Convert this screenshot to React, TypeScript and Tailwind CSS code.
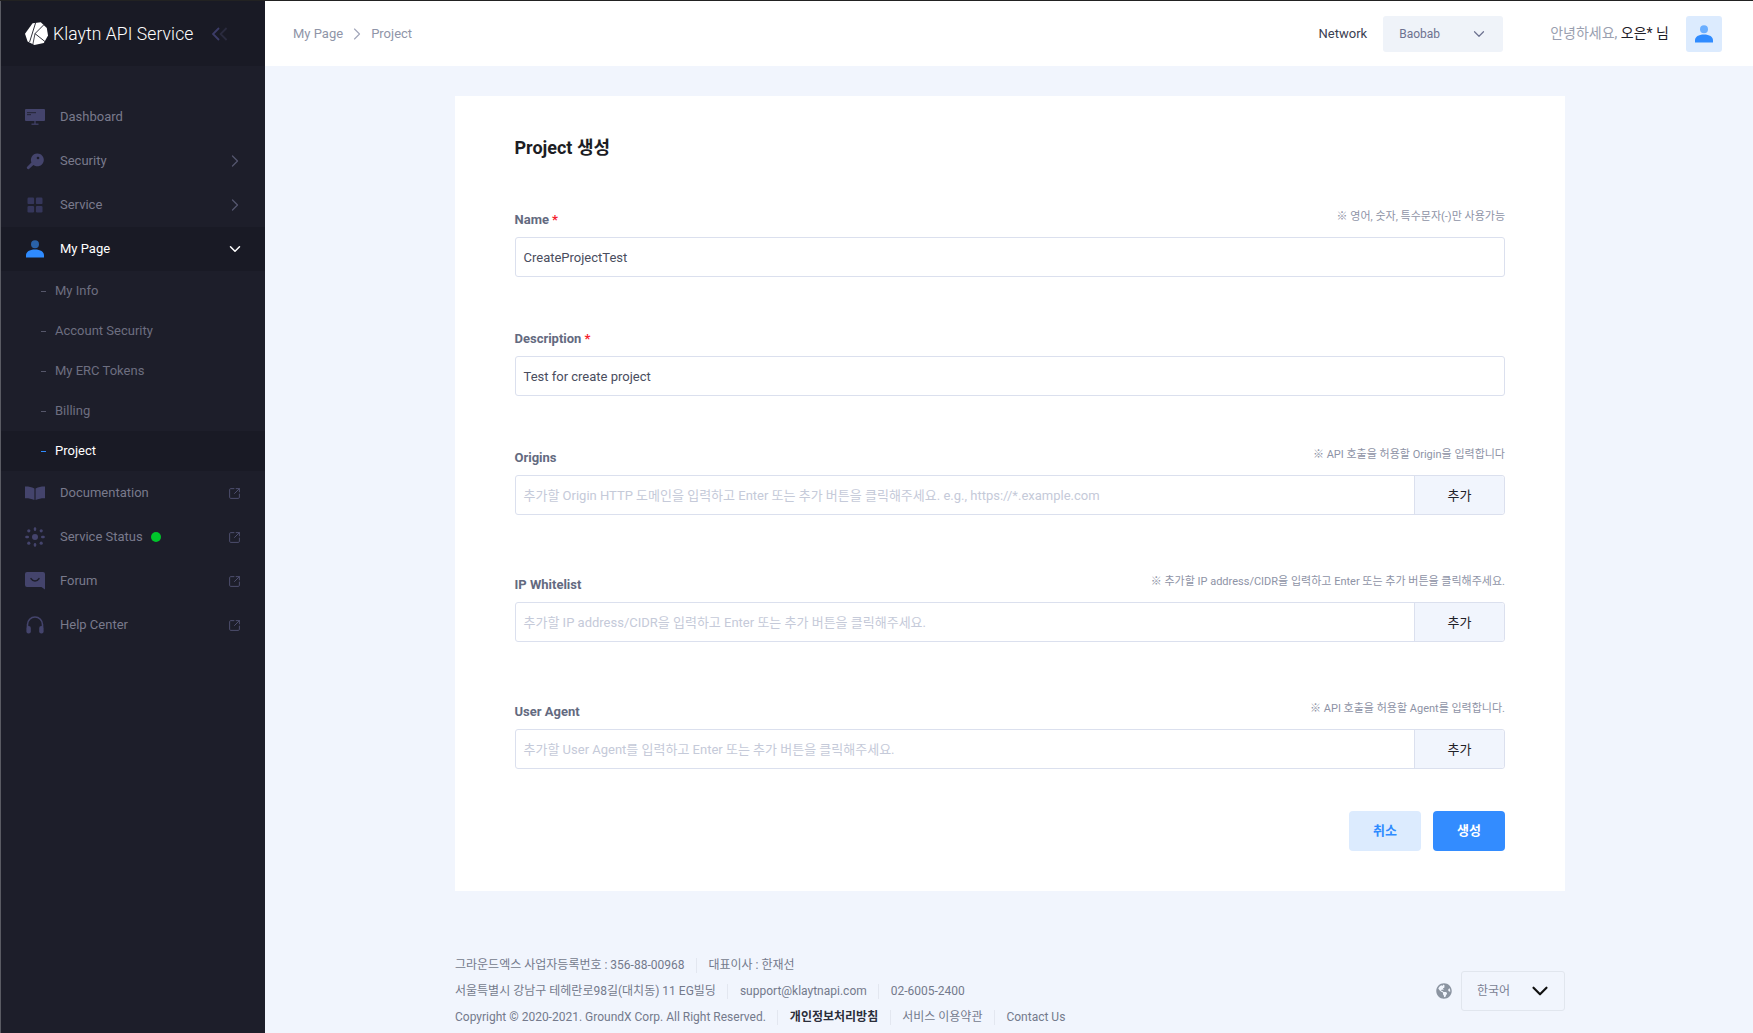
import { ChevronDown, ChevronRight, SquareArrowOutUpRight } from 'lucide-react'
import { FaGlobeAmericas } from 'react-icons/fa'
import type { ReactNode } from 'react'

const iconColor = '#44446c'

function DashboardIcon() {
  return (
    <svg width="20" height="16" viewBox="0 0 20 16">
      <rect x="0" y="0" width="20" height="12" rx="1" fill={iconColor} />
      <rect x="2" y="3" width="9" height="1.2" fill="#1d1e2a" opacity="0.7" />
      <rect x="2" y="5" width="4" height="1.2" fill="#1d1e2a" opacity="0.7" />
      <rect x="9.4" y="12" width="1.2" height="3" fill={iconColor} />
      <rect x="6.5" y="14.6" width="7" height="1.2" fill={iconColor} />
    </svg>
  )
}

function KeyIcon() {
  return (
    <svg width="18" height="17" viewBox="0 0 18 17">
      <path d="M11 0.5a6.4 6.4 0 1 1-3.6 11.4L3 16a1.5 1.5 0 0 1-2-2l4.4-4.6A6.4 6.4 0 0 1 11 0.5z" fill={iconColor} />
      <circle cx="12" cy="5" r="1.3" fill="#1d1e2a" />
    </svg>
  )
}

function GridIcon() {
  return (
    <svg width="16" height="16" viewBox="0 0 16 16" fill="#35365a">
      <rect x="0.5" y="0.5" width="6.6" height="6.6" rx="1.2" />
      <rect x="8.9" y="0.5" width="6.6" height="6.6" rx="1.2" />
      <rect x="0.5" y="8.9" width="6.6" height="6.6" rx="1.2" />
      <rect x="8.9" y="8.9" width="6.6" height="6.6" rx="1.2" />
    </svg>
  )
}

function UserIcon({ head, body }: { head: string; body: string }) {
  return (
    <svg width="18" height="18" viewBox="0 0 18 18">
      <circle cx="9" cy="4.2" r="4" fill={head} />
      <path d="M0 17.5v-2.2C0 12 3.5 9.6 9 9.6s9 2.4 9 5.7v2.2z" fill={body} />
    </svg>
  )
}

function BookIcon() {
  return (
    <svg width="20" height="14" viewBox="0 0 20 14" fill={iconColor}>
      <path d="M0 0.6C3 0.4 6 1 9.4 2.4V14C6 12.6 3 12 0 12.2z" />
      <path d="M20 0.6C17 0.4 14 1 10.6 2.4V14C14 12.6 17 12 20 12.2z" />
    </svg>
  )
}

function StatusIcon() {
  return (
    <svg width="20" height="20" viewBox="0 0 20 20" fill={iconColor}>
      <circle cx="10" cy="10" r="3" />
      <rect x="8.8" y="0.2" width="2.4" height="3.8" rx="1.2" />
      <rect x="8.8" y="16" width="2.4" height="3.8" rx="1.2" />
      <rect x="0.2" y="8.8" width="3.8" height="2.4" rx="1.2" />
      <rect x="16" y="8.8" width="3.8" height="2.4" rx="1.2" />
      <circle cx="3.8" cy="3.8" r="1.6" />
      <circle cx="16.2" cy="3.8" r="1.6" />
      <circle cx="3.8" cy="16.2" r="1.6" />
      <circle cx="16.2" cy="16.2" r="1.6" />
    </svg>
  )
}

function ForumIcon() {
  return (
    <svg width="20" height="18" viewBox="0 0 20 18">
      <path d="M2 0h16a2 2 0 0 1 2 2v15.6L16.4 15H2a2 2 0 0 1-2-2V2a2 2 0 0 1 2-2z" fill={iconColor} />
      <path d="M6 6.6c1 1.6 2.4 2.3 4 2.3s3-.7 4-2.3" stroke="#1d1e2a" strokeWidth="1.5" fill="none" strokeLinecap="round" />
    </svg>
  )
}

function HeadsetIcon() {
  return (
    <svg width="18" height="18" viewBox="0 0 18 18">
      <path d="M1.5 11V8.5a7.5 7.5 0 0 1 15 0V11" stroke={iconColor} strokeWidth="1.6" fill="none" />
      <rect x="0.4" y="10" width="4.4" height="7.4" rx="2" fill={iconColor} />
      <rect x="13.2" y="10" width="4.4" height="7.4" rx="2" fill={iconColor} />
    </svg>
  )
}

function KlaytnLogo() {
  return (
    <svg width="23" height="23" viewBox="0 0 23 23">
      <path d="M7.6 1.2L15.8 0.2L21.8 6L23 13.4L18.8 21L9.4 23L2.6 19.4L0 11.8z" fill="#fff" />
      <path d="M10.8 0.2L4.6 20" stroke="#191a25" strokeWidth="0.9" />
      <path d="M18.8 2.8L10 11.6L21 20.4" stroke="#191a25" strokeWidth="0.9" fill="none" />
      <path d="M10 11.6L7.8 22.6" stroke="#191a25" strokeWidth="0.8" />
    </svg>
  )
}

function MenuRow({ icon, label, right, active }: { icon: ReactNode; label: ReactNode; right?: ReactNode; active?: boolean }) {
  return (
    <div className={`flex items-center h-11 pl-6 pr-6 ${active ? 'bg-[#191a25] text-white' : 'text-[#797a8c]'}`}>
      <div className="w-5 h-5 flex items-center justify-center">{icon}</div>
      <div className="ml-[15px] flex-1 flex items-center text-[13px]">{label}</div>
      {right}
    </div>
  )
}

function SubRow({ label, active }: { label: string; active?: boolean }) {
  return (
    <div className={`flex items-center h-10 pl-10 text-[13px] ${active ? 'bg-[#191a25] text-white' : 'text-[#6d6e80]'}`}>
      <div className={`w-[5px] h-px ${active ? 'bg-[#2f8bff]' : 'bg-[#56576a]'}`} />
      <span className="ml-[9px]">{label}</span>
    </div>
  )
}

const ext = <SquareArrowOutUpRight size={13} strokeWidth={1.8} className="text-[#4f5070]" />
const arrow = <ChevronRight size={20} strokeWidth={1.5} className="text-[#55566e] -mr-[4px]" />

function Sidebar() {
  return (
    <aside className="w-[265px] shrink-0 bg-[#1d1e2a] border-l border-[#5a5b63]">
      <div className="h-[65px] bg-[#191a25] flex items-center pl-6">
        <KlaytnLogo />
        <span className="ml-[5px] pt-[2px] text-[17.5px] font-light text-white tracking-[0.1px]">Klaytn API Service</span>
        <svg className="ml-[19px]" width="16" height="14" viewBox="0 0 16 14" fill="none" strokeWidth="1.8">
          <path d="M14.6 1L8.6 7l6 6" stroke="#2a2b3e" />
          <path d="M7 1L1 7l6 6" stroke="#3c3c68" />
        </svg>
      </div>
      <nav className="pt-[29px]">
        <MenuRow icon={<DashboardIcon />} label="Dashboard" />
        <MenuRow icon={<KeyIcon />} label="Security" right={arrow} />
        <MenuRow icon={<GridIcon />} label="Service" right={arrow} />
        <MenuRow
          active
          icon={<UserIcon head="#2a62a8" body="#2f8bff" />}
          label="My Page"
          right={<ChevronDown size={18} strokeWidth={2} className="text-white -mr-[3px] -mt-[1px]" />}
        />
        <SubRow label="My Info" />
        <SubRow label="Account Security" />
        <SubRow label="My ERC Tokens" />
        <SubRow label="Billing" />
        <SubRow label="Project" active />
        <MenuRow icon={<BookIcon />} label="Documentation" right={ext} />
        <MenuRow
          icon={<StatusIcon />}
          label={
            <>
              Service Status
              <span className="ml-2 w-[10px] h-[10px] rounded-full bg-[#00c52b]" />
            </>
          }
          right={ext}
        />
        <MenuRow icon={<ForumIcon />} label="Forum" right={ext} />
        <MenuRow icon={<HeadsetIcon />} label="Help Center" right={ext} />
      </nav>
    </aside>
  )
}

function TopBar() {
  return (
    <header className="h-[65px] bg-white flex items-center pl-[28px] pr-[31px] text-[13px]">
      <span className="text-[#8f95a8]">My Page</span>
      <ChevronRight size={20} strokeWidth={1.4} className="text-[#a2a7ba] ml-[4px]" />
      <span className="text-[#8f95a8] ml-[4px]">Project</span>
      <div className="ml-auto flex items-center">
        <span className="text-[#3b4052]">Network</span>
        <div className="ml-4 w-[120px] h-9 rounded-[3px] bg-[#eff3f9] flex items-center pl-4 pr-[15px] text-[12px] text-[#6d7290]">
          <span className="flex-1">Baobab</span>
          <ChevronDown size={18} strokeWidth={1.6} className="text-[#6d7290]" />
        </div>
        <span className="ml-[47px] text-[#9a9fb0] text-[14px]">
          안녕하세요, <span className="text-[#1f2027]">오은* 님</span>
        </span>
        <div className="ml-[17px] w-9 h-9 rounded-[3px] bg-[#dcebfe] flex items-center justify-center">
          <UserIcon head="#6aaeff" body="#2f8bff" />
        </div>
      </div>
    </header>
  )
}

function Field({ label, required, hint, children, className }: { label: string; required?: boolean; hint?: string; children: ReactNode; className: string }) {
  return (
    <div className={className}>
      <div className="h-5 mb-[7px] flex items-center justify-between">
        <span className="text-[13px] font-bold text-[#636a80] -ml-[0.5px]">
          {label}
          {required && <span className="text-[#f5222d] ml-[3px]">*</span>}
        </span>
        {hint && <span className="text-[11px] text-[#8e93a6] pb-[5px]">{hint}</span>}
      </div>
      {children}
    </div>
  )
}

function ValueInput({ value }: { value: string }) {
  return (
    <div className="h-10 border border-[#dbe0ee] rounded-[3px] flex items-center pl-[7.5px] pr-2 pt-[2px] text-[13px] text-[#494d5e]">
      {value}
    </div>
  )
}

function AddInput({ placeholder }: { placeholder: string }) {
  return (
    <div className="h-10 border border-[#dbe0ee] rounded-[3px] flex">
      <div className="flex-1 flex items-center pl-[7.5px] pr-2 pt-[2px] text-[13px] text-[#c5cad9]">{placeholder}</div>
      <div className="w-[90px] bg-[#f1f5fd] border-l border-[#dbe0ee] rounded-r-[3px] flex items-center justify-center pt-[2px] text-[13px] text-[#1f2027]">
        추가
      </div>
    </div>
  )
}

function Sep() {
  return <span className="w-px h-[15px] bg-[#e3e7f0] mx-[11.5px]" />
}

function Footer() {
  return (
    <footer className="mt-[64px] flex items-center justify-between text-[12px] text-[#747a8c]">
      <div className="flex flex-col gap-[6px]">
        <div className="flex items-center h-5">
          <span>그라운드엑스 사업자등록번호 : 356-88-00968</span>
          <Sep />
          <span>대표이사 : 한재선</span>
        </div>
        <div className="flex items-center h-5">
          <span>서울특별시 강남구 테헤란로98길(대치동) 11 EG빌딩</span>
          <Sep />
          <span>support@klaytnapi.com</span>
          <Sep />
          <span>02-6005-2400</span>
        </div>
        <div className="flex items-center h-5">
          <span>Copyright © 2020-2021. GroundX Corp. All Right Reserved.</span>
          <Sep />
          <span className="font-bold text-[#2b2e3a]">개인정보처리방침</span>
          <Sep />
          <span>서비스 이용약관</span>
          <Sep />
          <span>Contact Us</span>
        </div>
      </div>
      <div className="flex items-center">
        <FaGlobeAmericas size={16} className="text-[#8b94a1]" />
        <div className="ml-[9px] w-[104px] h-10 border border-[#e1e6ee] rounded-[3px] flex items-center pl-[15px] pr-[11px] text-[#7a7f93]">
          <span className="flex-1">한국어</span>
          <ChevronDown size={26} strokeWidth={2} className="text-[#111]" />
        </div>
      </div>
    </footer>
  )
}

export default function App() {
  return (
    <div className="h-[1033px] overflow-hidden bg-[#f1f5fd] font-[Roboto,'Noto_Sans_CJK_KR',sans-serif]">
      <div className="h-px bg-[#222]" />
      <div className="flex h-[1032px]">
        <Sidebar />
        <div className="flex-1 min-w-0">
          <TopBar />
          <main className="pl-[190px] pt-[30px]">
            <section className="w-[1110px] bg-white px-[60px] pt-[39px] pb-[40px]">
              <h1 className="h-6 -ml-[0.5px] flex items-center text-[18px] font-bold text-[#1c1d24]">Project 생성</h1>
              <Field className="mt-[51px]" label="Name" required hint="※ 영어, 숫자, 특수문자(-)만 사용가능">
                <ValueInput value="CreateProjectTest" />
              </Field>
              <Field className="mt-[52px]" label="Description" required>
                <ValueInput value="Test for create project" />
              </Field>
              <Field className="mt-[52px]" label="Origins" hint="※ API 호출을 허용할 Origin을 입력합니다">
                <AddInput placeholder="추가할 Origin HTTP 도메인을 입력하고 Enter 또는 추가 버튼을 클릭해주세요. e.g., https://*.example.com" />
              </Field>
              <Field className="mt-[60px]" label="IP Whitelist" hint="※ 추가할 IP address/CIDR을 입력하고 Enter 또는 추가 버튼을 클릭해주세요.">
                <AddInput placeholder="추가할 IP address/CIDR을 입력하고 Enter 또는 추가 버튼을 클릭해주세요." />
              </Field>
              <Field className="mt-[60px]" label="User Agent" hint="※ API 호출을 허용할 Agent를 입력합니다.">
                <AddInput placeholder="추가할 User Agent를 입력하고 Enter 또는 추가 버튼을 클릭해주세요." />
              </Field>
              <div className="mt-[42px] flex justify-end gap-3">
                <button className="w-[72px] h-10 rounded-[4px] bg-[#dcebfe] text-[#2f8bff] text-[13px] font-bold">취소</button>
                <button className="w-[72px] h-10 rounded-[4px] bg-[#338cff] text-white text-[13px] font-bold">생성</button>
              </div>
            </section>
            <div className="w-[1110px]">
              <Footer />
            </div>
          </main>
        </div>
      </div>
    </div>
  )
}
